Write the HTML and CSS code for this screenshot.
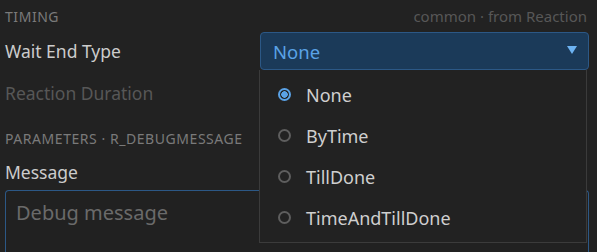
FILE: index.html
```html
<!DOCTYPE html>
<html lang="en">
<head>
    <meta charset="UTF-8">
    <title>Reaction Inspector</title>
    <link rel="stylesheet" href="styles.css">
</head>
<body>
    <div class="panel">
        <div class="section-head">
            <span class="section-title">Timing</span>
            <span class="section-meta">common · from Reaction</span>
        </div>

        <div class="field-row first">
            <label class="field-label">Wait End Type</label>
            <div class="select-wrap">
                <div class="select open">
                    <span class="select-value">None</span>
                    <span class="select-arrow"></span>
                </div>
                <ul class="dropdown">
                    <li class="option selected"><span class="radio"></span>None</li>
                    <li class="option"><span class="radio"></span>ByTime</li>
                    <li class="option"><span class="radio"></span>TillDone</li>
                    <li class="option"><span class="radio"></span>TimeAndTillDone</li>
                </ul>
            </div>
        </div>

        <div class="field-row">
            <label class="field-label disabled">Reaction Duration</label>
        </div>

        <div class="section-head params">
            <span class="section-title">Parameters · R_DebugMessage</span>
        </div>

        <label class="field-label block">Message</label>
        <textarea class="text-input" placeholder="Debug message"></textarea>
    </div>
</body>
</html>
```

FILE: styles.css
```css
body {
    margin: 0;
    background: #222222;
    font-family: "Noto Sans", "Open Sans", sans-serif;
    color: #cccccc;
    overflow: hidden;
}

.panel {
    padding: 4px 8px 0 5px;
}

.section-head {
    display: flex;
    justify-content: space-between;
    align-items: center;
    height: 24px;
}

.section-title {
    font-size: 14px;
    letter-spacing: 0.55px;
    text-transform: uppercase;
    color: #7a7a7a;
}

.section-meta {
    font-size: 15px;
    color: #575757;
    margin-right: 2px;
}

.field-row {
    display: grid;
    grid-template-columns: 255px 1fr;
    align-items: center;
    height: 38px;
}

.field-row.first {
    height: 46px;
}

.field-label {
    font-size: 17.5px;
    color: #cccccc;
}

.field-label.disabled {
    color: #575757;
}

.field-label.block {
    display: block;
    margin-top: 10px;
    line-height: 24px;
}

.params {
    margin-top: 14px;
}

.select-wrap {
    position: relative;
}

.select {
    display: flex;
    align-items: center;
    justify-content: space-between;
    height: 36px;
    padding: 0 11px 0 12px;
    background: #1b3a59;
    border: 1px solid #2c5886;
    border-radius: 4px;
}

.select-value {
    font-size: 18.5px;
    color: #5aa2e6;
}

.select-arrow {
    width: 0;
    height: 0;
    border-left: 5px solid transparent;
    border-right: 5px solid transparent;
    border-top: 8px solid #6db3f2;
    margin-top: -2px;
}

.dropdown {
    position: absolute;
    top: 38px;
    left: -1px;
    right: 2px;
    margin: 0;
    padding: 4px 0;
    list-style: none;
    background: #222222;
    border: 1px solid #3b3b3b;
    border-top: none;
    z-index: 5;
}

.option {
    display: flex;
    align-items: center;
    height: 41px;
    padding-left: 18px;
    font-size: 18px;
    color: #cfcfcf;
}

.radio {
    box-sizing: border-box;
    width: 13px;
    height: 13px;
    margin-right: 15px;
    border: 2px solid #5e5e5e;
    border-radius: 50%;
}

.option.selected .radio {
    border-color: #5aa2e6;
    background: radial-gradient(circle, #5aa2e6 0 3px, transparent 3.5px);
}

.text-input {
    display: block;
    box-sizing: border-box;
    width: 100%;
    height: 62px;
    margin-top: 6px;
    padding: 8px 10px;
    background: #212121;
    border: 1px solid #2c5886;
    border-bottom: none;
    border-radius: 4px 4px 0 0;
    font-family: inherit;
    font-size: 20px;
    color: #cccccc;
    resize: none;
}

.text-input::placeholder {
    color: #6a6a6a;
}
```
